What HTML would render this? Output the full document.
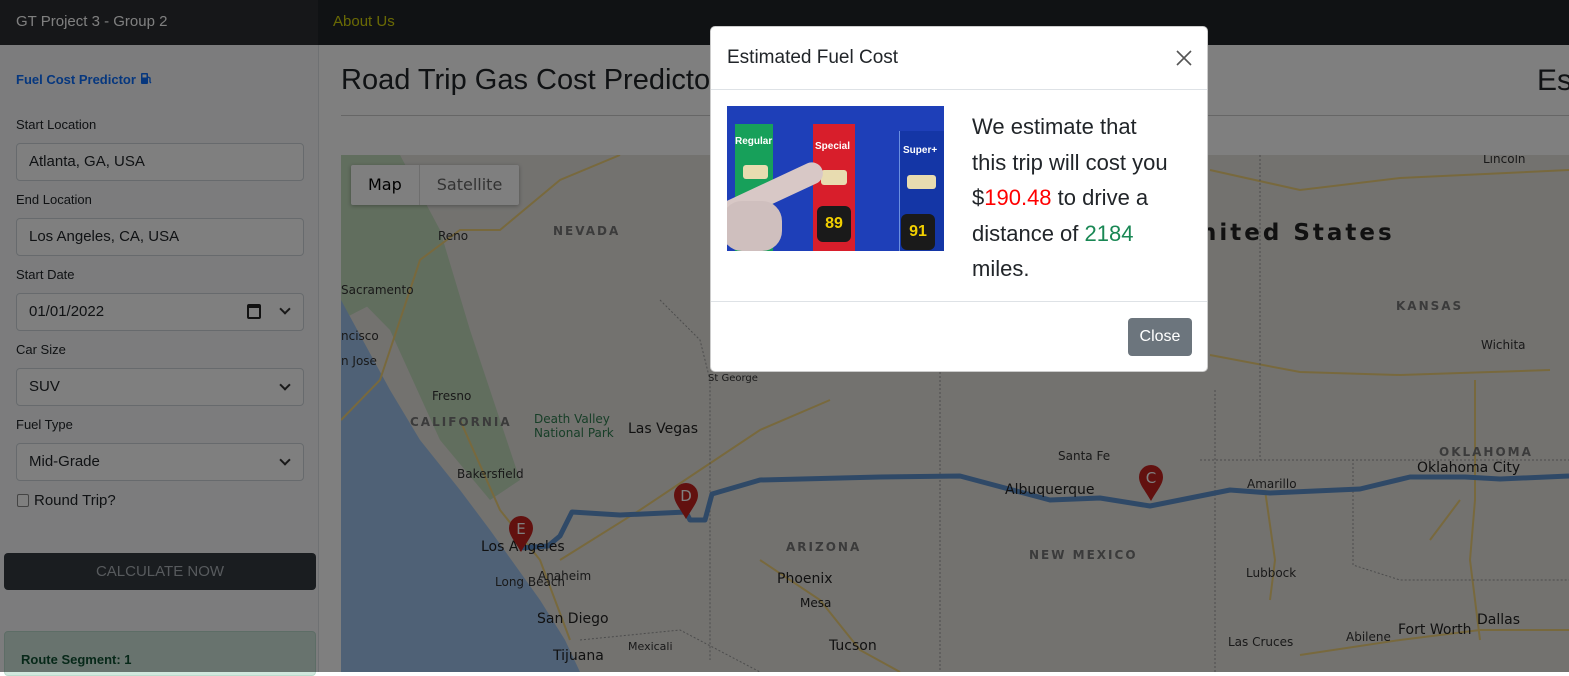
<!DOCTYPE html>
<html><head><meta charset="utf-8">
<style>
*{box-sizing:border-box;margin:0;padding:0}
body{width:1569px;height:672px;overflow:hidden;position:relative;font-family:"Liberation Sans",sans-serif;background:#fff;color:#212529}
.nav{position:absolute;left:0;top:0;width:1569px;height:45px;background:#212529}
.brand{position:absolute;left:0;top:0;width:318px;height:45px;background:#2c2f33;color:#fff;font-size:15px;padding:13px 16px}
.about{position:absolute;left:333px;top:13px;color:#ffff00;font-size:15px;opacity:.8}
.side{position:absolute;left:0;top:45px;width:319px;height:627px;background:#f8f9fa;border-right:1px solid #dee2e6}
.fc{position:absolute;left:16px;top:72px;color:#0d6efd;font-size:13px;font-weight:bold}
.lbl{position:absolute;left:16px;font-size:13px;color:#212529}
.inp{position:absolute;left:16px;width:288px;height:38px;border:1px solid #ced4da;border-radius:4px;background:#fff;font-size:15px;padding:9px 12px;color:#212529}
.chev{position:absolute;right:14px;top:12px;width:8px;height:8px;border-right:2px solid #333;border-bottom:2px solid #333;transform:rotate(45deg)}
.btn{position:absolute;left:4px;top:553px;width:312px;height:37px;background:#343a40;border-radius:4px;color:#aeb4ba;font-size:15px;text-align:center;line-height:37px}
.card{position:absolute;left:4px;top:631px;width:312px;height:45px;background:#d1e7dd;border:1px solid #badbcc;border-radius:4px;color:#0f5132;font-weight:bold;font-size:13px;padding:20px 16px}
h1{position:absolute;left:341px;top:64px;font-size:29px;font-weight:500;color:#212529;white-space:nowrap}
.hr{position:absolute;left:341px;top:115px;width:1228px;height:1px;background:#ccc}
.map{position:absolute;left:341px;top:155px}
.mt{position:absolute;left:351px;top:165px;height:40px;background:#fff;box-shadow:0 1px 4px rgba(0,0,0,.3);border-radius:2px;font-family:"DejaVu Sans",sans-serif;font-size:16px}
.mt span{display:inline-block;height:40px;line-height:40px;padding:0 17px}
.back{position:absolute;left:0;top:0;width:1569px;height:672px;background:rgba(0,0,0,.5)}
.modal{position:absolute;left:710px;top:26px;width:498px;height:346px;background:#fff;border-radius:5px;border:1px solid rgba(0,0,0,.2)}
.mh{height:63px;border-bottom:1px solid #dee2e6;padding:20px 16px;font-size:19px;color:#212529}
.x{position:absolute;right:14px;top:22px;width:18px;height:18px}
.img{position:absolute;left:16px;top:79px;width:217px;height:145px;background:#1e3fb8;overflow:hidden}
.mtext{position:absolute;left:261px;top:82px;width:235px;font-size:22px;line-height:35.5px;color:#212529;white-space:nowrap}
.mf{position:absolute;left:0;top:274px;width:496px;border-top:1px solid #dee2e6}
.cb{position:absolute;left:417px;top:291px;width:64px;height:38px;background:#6c757d;color:#fff;border-radius:4px;font-size:16px;text-align:center;line-height:38px}
</style></head><body>
<div class="nav"></div>
<div class="brand">GT Project 3 - Group 2</div>
<div class="about">About Us</div>
<div class="side"></div>
<div class="fc">Fuel Cost Predictor <svg width="12" height="13" viewBox="0 0 12 13" style="vertical-align:-1px"><rect x="1" y="1" width="7" height="11" rx="1" fill="#0d6efd"/><rect x="2.5" y="2.5" width="4" height="3" fill="#fff"/><path d="M8 5 L10 6 L10 10 L11 11" stroke="#0d6efd" fill="none" stroke-width="1.3"/></svg></div>
<div class="lbl" style="top:117px">Start Location</div>
<div class="inp" style="top:143px">Atlanta, GA, USA</div>
<div class="lbl" style="top:192px">End Location</div>
<div class="inp" style="top:218px">Los Angeles, CA, USA</div>
<div class="lbl" style="top:267px">Start Date</div>
<div class="inp" style="top:293px">01/01/2022<span style="position:absolute;left:230px;top:10px;width:14px;height:15px;border:2px solid #222;border-top-width:4px;border-radius:2px"></span><span class="chev" style="top:11px"></span></div>
<div class="lbl" style="top:342px">Car Size</div>
<div class="inp" style="top:368px">SUV<span class="chev"></span></div>
<div class="lbl" style="top:417px">Fuel Type</div>
<div class="inp" style="top:443px">Mid-Grade<span class="chev"></span></div>
<div style="position:absolute;left:17px;top:494px;width:12px;height:13px;border:1px solid #888;border-radius:2px;background:#fff"></div>
<div class="lbl" style="left:34px;top:492px;font-size:15px">Round Trip?</div>
<div class="btn">CALCULATE NOW</div>
<div class="card">Route Segment: 1</div>

<h1>Road Trip Gas Cost Predictor</h1>
<div style="position:absolute;left:1537px;top:64px;font-size:30px;font-weight:500">Est</div>
<div class="hr"></div>

<svg class="map" width="1228" height="517" viewBox="341 155 1228 517">
<rect x="341" y="155" width="1228" height="517" fill="#e6e4df"/>
<path d="M341 155 L400 155 L440 230 L470 330 L500 420 L520 480 L490 500 L440 440 L390 330 L341 280Z" fill="#c3dcbd"/>
<path d="M341 180 L360 250 L380 300 L341 320Z" fill="#c3dcbd"/>
<path d="M341 300 L360 335 L390 390 L420 440 L460 490 L490 530 L515 565 L540 600 L565 640 L580 672 L341 672Z" fill="#9ec3ec"/>
<g fill="none" stroke="#f0d27a" stroke-width="2">
<path d="M341 420 L380 380 L420 260 L460 230 L500 230 L560 180 L620 155"/>
<path d="M460 420 L500 510 L540 560 L570 640"/>
<path d="M560 560 L640 510 L700 470 L760 430 L830 400"/>
<path d="M760 560 L820 600 L860 650 L900 672"/>
<path d="M1210 170 L1300 190 L1400 178 L1569 170"/>
<path d="M1210 355 L1300 372 L1400 375 L1550 370"/>
<path d="M1475 380 L1475 500 L1470 560 L1480 640"/>
<path d="M1265 490 L1275 560 L1270 600"/>
<path d="M1430 540 L1460 500"/>
<path d="M1300 655 L1400 640 L1480 630 L1569 630"/>
</g>
<g fill="none" stroke="#999" stroke-width="1" stroke-dasharray="2 2">
<path d="M660 300 L700 340 L710 380 L710 660"/>
<path d="M940 360 L940 672"/>
<path d="M1215 390 L1215 672"/>
<path d="M1260 460 L1353 460 L1353 565 L1400 580 L1569 580"/>
<path d="M1200 460 L1569 460"/>
<path d="M1260 155 L1260 460"/>
<path d="M580 640 L680 630 L760 672"/>
</g>
<path d="M520 548 L548 546 L560 536 L572 512 L620 515 L686 512 L690 520 L705 520 L712 494 L760 480 L880 477 L960 476 L990 484 L1050 500 L1100 498 L1150 506 L1200 496 L1230 490 L1270 493 L1360 489 L1410 477 L1465 477 L1500 479 L1569 476" fill="none" stroke="#5f93cf" stroke-width="5" stroke-linejoin="round"/>
<g font-family="DejaVu Sans,sans-serif" font-size="12" fill="#333">
<text x="438" y="240">Reno</text><text x="341" y="294">Sacramento</text><text x="341" y="340">ncisco</text><text x="341" y="365">n Jose</text>
<text x="432" y="400">Fresno</text><text x="457" y="478">Bakersfield</text><text x="538" y="580">Anaheim</text><text x="495" y="586">Long Beach</text>
<text x="708" y="381" font-size="10">St George</text><text x="1058" y="460">Santa Fe</text><text x="1247" y="488">Amarillo</text><text x="1246" y="577">Lubbock</text>
<text x="1481" y="349">Wichita</text><text x="1483" y="163">Lincoln</text><text x="1346" y="641">Abilene</text><text x="1228" y="646">Las Cruces</text>
<text x="628" y="650" font-size="11">Mexicali</text>
</g>
<g font-family="DejaVu Sans,sans-serif" font-size="14" fill="#222">
<text x="628" y="433">Las Vegas</text><text x="481" y="551">Los Angeles</text><text x="537" y="623">San Diego</text><text x="553" y="660">Tijuana</text>
<text x="777" y="583">Phoenix</text><text x="829" y="650">Tucson</text><text x="1005" y="494">Albuquerque</text><text x="1417" y="472">Oklahoma City</text>
<text x="1398" y="634">Fort Worth</text><text x="1477" y="624">Dallas</text>
<text x="800" y="607" font-size="12">Mesa</text>
</g>
<g font-family="DejaVu Sans,sans-serif" font-size="12" fill="#777" font-weight="bold" letter-spacing="2">
<text x="553" y="235">NEVADA</text><text x="410" y="426">CALIFORNIA</text><text x="786" y="551">ARIZONA</text><text x="1029" y="559">NEW MEXICO</text>
<text x="1396" y="310">KANSAS</text><text x="1439" y="456">OKLAHOMA</text>
</g>
<text x="534" y="423" font-family="DejaVu Sans,sans-serif" font-size="12" fill="#2e7d4f">Death Valley</text>
<text x="534" y="437" font-family="DejaVu Sans,sans-serif" font-size="12" fill="#2e7d4f">National Park</text>
<text x="1200" y="240" font-family="DejaVu Sans,sans-serif" font-size="23" fill="#222" font-weight="bold" letter-spacing="3">nited States</text>
<g fill="#c5221f">
<path d="M521 552 C514 540 509 535 509 528 A12 12 0 0 1 533 528 C533 535 528 540 521 552Z"/>
<path d="M686 519 C679 507 674 502 674 495 A12 12 0 0 1 698 495 C698 502 693 507 686 519Z"/>
<path d="M1151 501 C1144 489 1139 484 1139 477 A12 12 0 0 1 1163 477 C1163 484 1158 489 1151 501Z"/>
</g>
<g fill="#fff" font-family="DejaVu Sans,sans-serif" font-size="15" text-anchor="middle">
<text x="521" y="534">E</text><text x="686" y="501">D</text><text x="1151" y="483">C</text>
</g>
</svg>
<div class="mt"><span style="color:#000;font-weight:500">Map</span><span style="color:#666;border-left:1px solid #ddd">Satellite</span></div>

<div class="back"></div>
<div class="modal">
<div class="mh">Estimated Fuel Cost</div>
<svg class="x" viewBox="0 0 18 18"><path d="M2 2 L16 16 M16 2 L2 16" stroke="#555" stroke-width="1.6"/></svg>
<div class="img">
<div style="position:absolute;left:8px;top:18px;width:38px;height:130px;background:#17a05a"></div>
<div style="position:absolute;left:86px;top:18px;width:42px;height:130px;background:#d81e2b"></div>
<div style="position:absolute;left:172px;top:25px;width:45px;height:125px;background:#1436a6;border-left:1px solid #6a8fe0"></div>
<div style="position:absolute;left:8px;top:30px;color:#fff;font-size:10px;font-weight:bold">Regular</div>
<div style="position:absolute;left:88px;top:35px;color:#fff;font-size:10px;font-weight:bold">Special</div>
<div style="position:absolute;left:176px;top:39px;color:#fff;font-size:10px;font-weight:bold">Super+</div>
<div style="position:absolute;left:16px;top:59px;width:25px;height:14px;background:#e8dcb0;border-radius:3px"></div>
<div style="position:absolute;left:94px;top:64px;width:26px;height:15px;background:#e8dcb0;border-radius:3px"></div>
<div style="position:absolute;left:180px;top:69px;width:29px;height:14px;background:#e8dcb0;border-radius:3px"></div>
<div style="position:absolute;left:90px;top:100px;width:34px;height:36px;background:#1a1a1a;border-radius:6px;color:#f2d000;font-weight:bold;text-align:center;line-height:36px;font-size:16px">89</div>
<div style="position:absolute;left:174px;top:108px;width:34px;height:36px;background:#1a1a1a;border-radius:6px;color:#f2d000;font-weight:bold;text-align:center;line-height:36px;font-size:16px">91</div>
<div style="position:absolute;left:-10px;top:75px;width:110px;height:22px;background:#d8c8c6;border-radius:11px;transform:rotate(-25deg)"></div>
<div style="position:absolute;left:-5px;top:95px;width:60px;height:50px;background:#cfbfbe;border-radius:20px"></div>
</div>
<div class="mtext">We estimate that<br>this trip will cost you<br>$<span style="color:#ff0000">190.48</span> to drive a<br>distance of <span style="color:#198754">2184</span><br>miles.</div>
<div class="mf"></div>
<div class="cb">Close</div>
</div>
</body></html>
